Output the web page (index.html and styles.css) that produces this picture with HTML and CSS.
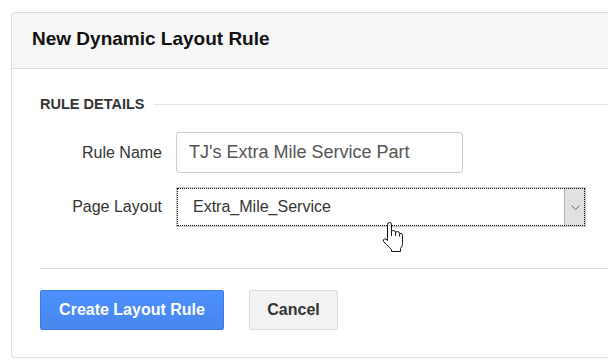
FILE: index.html
```html
<!DOCTYPE html>
<html lang="en">
<head>
    <meta charset="UTF-8">
    <title>New Dynamic Layout Rule</title>
    <link rel="stylesheet" href="styles.css">
</head>
<body>
    <div class="panel">
        <div class="panel-header">New Dynamic Layout Rule</div>

        <div class="panel-body">
            <div class="section-title">
                <span>RULE DETAILS</span>
                <div class="section-line"></div>
            </div>

            <div class="form-row">
                <label class="form-label">Rule Name</label>
                <div class="text-input">TJ's Extra Mile Service Part</div>
            </div>

            <div class="form-row">
                <label class="form-label">Page Layout</label>
                <div class="select-box">
                    <span class="select-value">Extra_Mile_Service</span>
                    <span class="select-arrow">
                        <svg width="9" height="5" viewBox="0 0 9 5"><path d="M0.5 0.5 L4.5 4.5 L8.5 0.5" fill="none" stroke="#666" stroke-width="1"/></svg>
                    </span>
                </div>
            </div>

            <div class="divider"></div>

            <div class="actions">
                <button class="btn btn-primary">Create Layout Rule</button>
                <button class="btn btn-default">Cancel</button>
            </div>
        </div>
    </div>

    <!-- mouse pointer over the select -->
    <svg class="cursor" width="22" height="31" viewBox="0 0 22 31">
        <path d="M5.5 16.5 V2.5 Q5.5 0.5 7.5 0.5 Q9.5 0.5 9.5 2.5 V9.5 Q9.5 8.5 11.5 8.5 Q13.5 8.5 13.5 10.5 V11 Q13.5 9.5 15.5 9.5 Q17.5 9.5 17.5 11.5 V12.5 Q17.5 11.5 19 11.5 Q20.5 11.5 20.5 13.5 V21.5 Q20.5 24.5 18.5 26.5 V29.5 H9.5 V27.5 Q7.5 25.5 4.5 22.5 L1.5 19.5 Q0.5 17.5 2.5 17 Q4 16.5 5.5 18.5 Z" fill="#fff" stroke="#111" stroke-width="1" stroke-linejoin="round"/>
        <path d="M9.5 9.5 V14 M13.5 11 V14 M17.5 12.5 V14.5" fill="none" stroke="#111" stroke-width="1"/>
    </svg>
</body>
</html>
```

FILE: styles.css
```css
* {
    margin: 0;
    padding: 0;
    box-sizing: border-box;
}

body {
    background-color: #fff;
    font-family: "Liberation Sans", Arial, sans-serif;
    color: #333;
    overflow: hidden;
    position: relative;
    width: 608px;
    height: 364px;
}

/* panel is cut off by the right edge, so no right border */
.panel {
    margin: 12px 0 0 11px;
    width: 597px;
    border: 1px solid #ddd;
    border-right: none;
    border-radius: 4px 0 0 4px;
    background-color: #fff;
}

.panel-header {
    background-color: #f7f7f7;
    border-bottom: 1px solid #ddd;
    border-radius: 4px 0 0 0;
    height: 56px;
    padding: 15px 0 0 20px;
    font-size: 19px;
    line-height: 22px;
    font-weight: bold;
    color: #111;
}

.panel-body {
    padding: 27px 0 27px 28px;
}

/* section heading with rule */
.section-title {
    display: flex;
    align-items: center;
    font-size: 14.5px;
    line-height: 16px;
    font-weight: bold;
    color: #333;
}

.section-line {
    flex: 1;
    height: 1px;
    background-color: #e6e6e6;
    margin-left: 10px;
}

.form-row {
    display: flex;
    align-items: center;
    margin-top: 14px;
}

.section-title + .form-row {
    margin-top: 20px;
}

.form-label {
    width: 122px;
    margin-right: 14px;
    text-align: right;
    font-size: 16px;
    color: #333;
}

.text-input {
    width: 287px;
    height: 41px;
    border: 1px solid #ccc;
    border-radius: 3px;
    padding-left: 12px;
    font-size: 18px;
    line-height: 39px;
    color: #555;
}

.select-box {
    width: 410px;
    height: 40px;
    border: 1px solid #c6c6c6;
    outline: 1px dotted #111;
    outline-offset: -2px;
    display: flex;
    align-items: stretch;
    font-size: 16px;
    color: #333;
}

.select-value {
    flex: 1;
    padding-left: 16px;
    line-height: 38px;
}

.select-arrow {
    width: 21px;
    background-color: #e1e1e1;
    border-left: 1px solid #adadad;
    display: flex;
    justify-content: center;
    align-items: center;
}

.divider {
    height: 1px;
    background-color: #ddd;
    margin-top: 41px;
}

.actions {
    display: flex;
    gap: 25px;
    margin-top: 21px;
}

.btn {
    height: 40px;
    font-family: "Liberation Sans", Arial, sans-serif;
    font-size: 16px;
    font-weight: bold;
    border-radius: 2px;
    cursor: pointer;
}

.btn-primary {
    width: 184px;
    background: linear-gradient(#4d90fe, #4787ed);
    border: 1px solid #3b7ae6;
    color: #fff;
}

.btn-default {
    width: 89px;
    background-color: #f2f2f2;
    border: 1px solid #dcdcdc;
    color: #333;
}

.cursor {
    position: absolute;
    left: 382px;
    top: 222px;
}
```
